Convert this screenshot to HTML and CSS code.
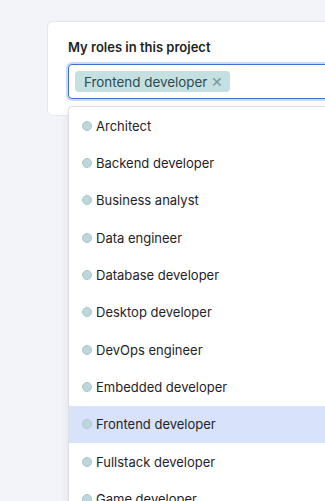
FILE: index.html
```html
<!DOCTYPE html>
<html lang="en">
<head>
    <meta charset="UTF-8">
    <meta name="viewport" content="width=device-width, initial-scale=1.0">
    <title>Project roles</title>
    <link rel="stylesheet" href="styles.css">
</head>
<body>
    <div class="card">
        <label class="field-label" for="roles">My roles in this project</label>
        <div class="select">
            <div class="select-control">
                <span class="tag">Frontend developer <span class="tag-remove">&#x2715;</span></span>
                <input type="text" id="roles" class="select-input">
            </div>
            <ul class="menu">
                <li class="option"><span class="dot"></span>Architect</li>
                <li class="option"><span class="dot"></span>Backend developer</li>
                <li class="option"><span class="dot"></span>Business analyst</li>
                <li class="option"><span class="dot"></span>Data engineer</li>
                <li class="option"><span class="dot"></span>Database developer</li>
                <li class="option"><span class="dot"></span>Desktop developer</li>
                <li class="option"><span class="dot"></span>DevOps engineer</li>
                <li class="option"><span class="dot"></span>Embedded developer</li>
                <li class="option active"><span class="dot"></span>Frontend developer</li>
                <li class="option"><span class="dot"></span>Fullstack developer</li>
                <li class="option"><span class="dot"></span>Game developer</li>
            </ul>
        </div>
    </div>
</body>
</html>
```

FILE: styles.css
```css
body {
    font-family: Inter, "Noto Sans", sans-serif;
    background-color: #f3f4fa;
    margin: 0;
    padding: 21px 0 0 47px;
    height: 100vh;
    box-sizing: border-box;
    overflow: hidden;
    color: #1f2328;
}

.card {
    background: white;
    border: 1px solid #e6e8f0;
    border-radius: 6px;
    width: 340px;
    height: 95px;
    padding: 17px 0 0 20px;
    box-sizing: border-box;
}

.field-label {
    display: block;
    font-size: 13px;
    font-weight: 600;
    color: #1d1f24;
    margin-bottom: 9px;
}

.select {
    position: relative;
}

.select-control {
    display: flex;
    align-items: center;
    height: 35px;
    box-sizing: border-box;
    border: 1px solid #3f6fd6;
    border-radius: 4px;
    box-shadow: 0 0 0 2px #cddbf7;
    padding: 0 6px;
    background: white;
}

.tag {
    display: inline-flex;
    align-items: center;
    gap: 4px;
    background: #c4e0e1;
    color: #2f4a4e;
    font-size: 13.4px;
    border-radius: 4px;
    height: 21px;
    padding: 0 7px 0 9px;
}

.tag-remove {
    font-size: 14px;
    line-height: 1;
    color: #7a9396;
}

.select-input {
    border: none;
    outline: none;
    flex: 1;
    min-width: 0;
}

.menu {
    position: absolute;
    top: 42px;
    left: 0;
    width: 320px;
    margin: 0;
    padding: 0;
    list-style: none;
    background: white;
    border: 1px solid #dedfe4;
    border-radius: 4px;
    box-shadow: 0 2px 8px rgba(0, 0, 0, 0.08);
}

.option {
    display: flex;
    align-items: center;
    height: 37.33px;
    padding-left: 13px;
    font-size: 13px;
    color: #1f2328;
}

.option.active {
    background: #d8e3fb;
}

.dot {
    width: 8px;
    height: 8px;
    border-radius: 50%;
    background: #bcd8da;
    border: 1px solid #a9c7ca;
    margin-right: 4px;
}
```
